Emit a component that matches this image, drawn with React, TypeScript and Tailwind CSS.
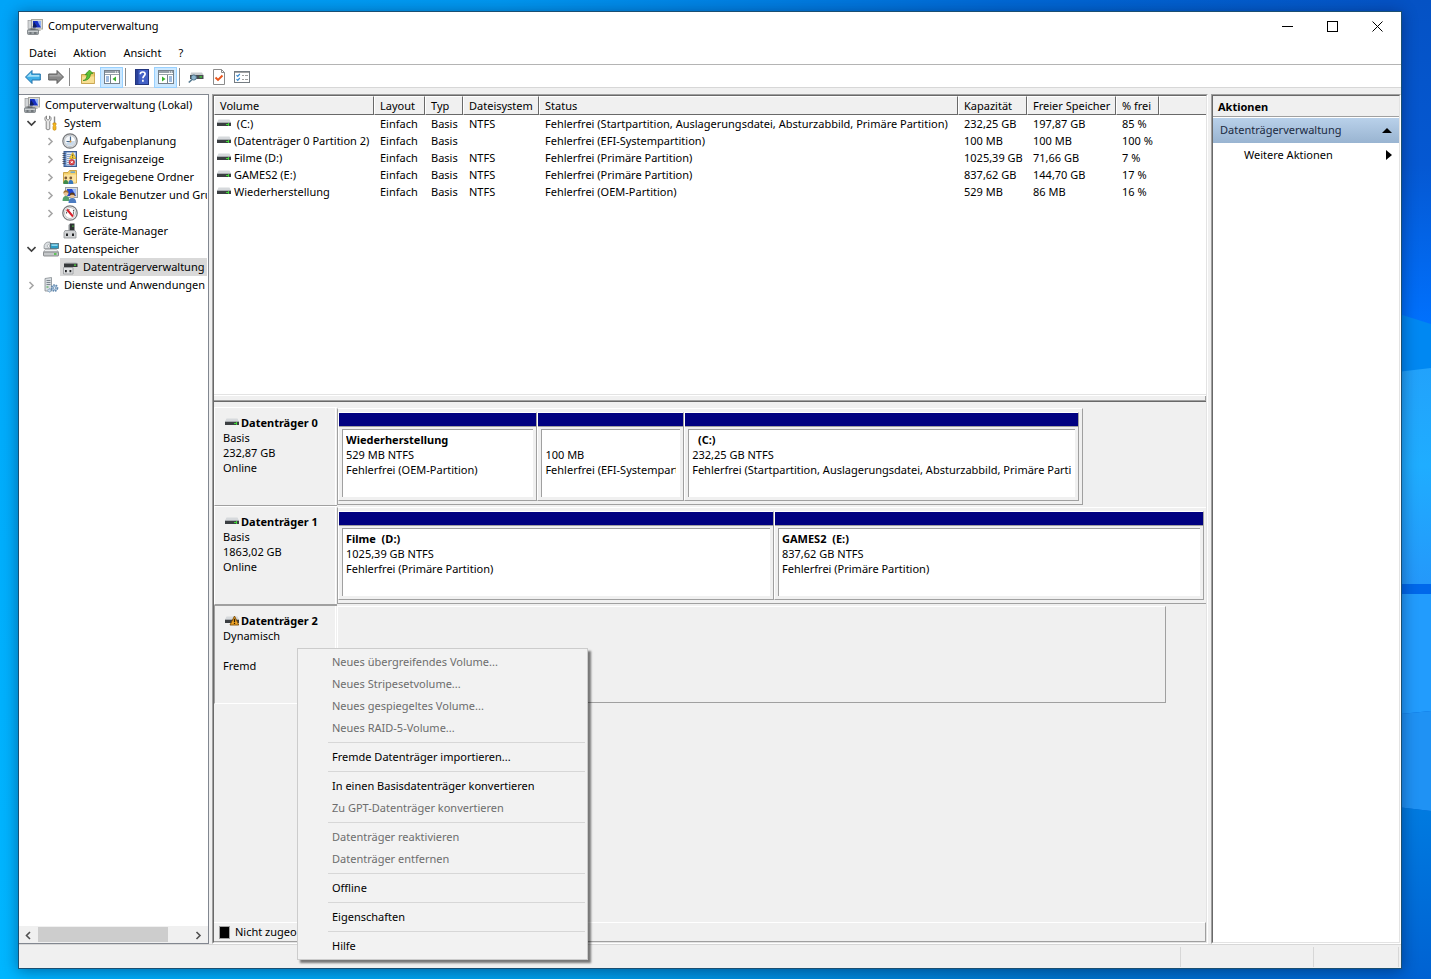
import React from 'react';

type IconProps = { className?: string };
type IconType = React.FC<IconProps>;

/* ---------- Icons ---------- */

const ComputerIcon: IconType = () => (
  <svg width="16" height="16" viewBox="0 0 16 16" className="shrink-0">
    <rect x="4.5" y="0.5" width="11" height="9.5" fill="#dcdcd6" stroke="#a9a9a1" />
    <rect x="6" y="2" width="8" height="6.5" fill="#1730c4" />
    <path d="M10.5 2H14v6.500q-2-3-3.500-6.500z" fill="#8fb0f5" />
    <path d="M8 10.500h5l1 1.500H7z" fill="#b9b9b2" />
    <rect x="1" y="1.500" width="3.500" height="8" fill="#d3d6d8" stroke="#8a8d90" strokeWidth="0.600" />
    <path d="M7 3l3 4.500-1.500 1H5.500z" fill="#10205c" />
    <rect x="0.500" y="10.500" width="11" height="5" rx="1" fill="#9aa0a4" stroke="#6b7176" strokeWidth="0.700" />
    <path d="M1 12.500h10" stroke="#c9cdcf" />
    <path d="M2.500 14h2M7 14h2.500" stroke="#474c50" />
    <path d="M3.500 10h5" stroke="#4e5357" />
  </svg>
);

const ToolsIcon: IconType = () => (
  <svg width="16" height="16" viewBox="0 0 16 16" className="shrink-0">
    <path d="M3.500 1v3L5 5.200 6.500 4V1C8.700 2.200 8.500 5 6.800 6.500V14q-1.800 1.800-3.600 0V6.500C1.500 5 1.300 2.200 3.500 1z" fill="#e6e6e6" stroke="#7c7c7c" strokeWidth="0.900" />
    <path d="M11.500 1.500v7" stroke="#8a8a8a" strokeWidth="1.400" />
    <path d="M10 8h3v2l-.6.700.6 1V14.500q-1.500 1.500-3 0v-2.800l.600-1-.600-.700z" fill="#f5b921" stroke="#c98a10" strokeWidth="0.700" />
  </svg>
);

const ClockIcon: IconType = () => (
  <svg width="16" height="16" viewBox="0 0 16 16" className="shrink-0">
    <circle cx="8" cy="8" r="7.200" fill="#dfe2e4" stroke="#77797c" strokeWidth="1.200" />
    <circle cx="8" cy="8" r="5.500" fill="#f4f7fa" stroke="#b4b8bc" strokeWidth="0.800" />
    <path d="M8 8V3.500h1.500A4.500 4.500 0 0 1 12.500 8z" fill="#fff" />
    <path d="M8 8h4.800A4.800 4.800 0 0 1 4 10.500z" fill="#c8d9ea" />
    <path d="M8.500 3.500V8.500H4.500" fill="none" stroke="#44688f" strokeWidth="1.200" />
    <circle cx="8.500" cy="8.500" r="0.900" fill="#e0952c" />
  </svg>
);

const EventIcon: IconType = () => (
  <svg width="16" height="16" viewBox="0 0 16 16" className="shrink-0">
    <rect x="2" y="0.500" width="12.500" height="15" fill="#5f88c4" stroke="#3c5c93" />
    <rect x="4.500" y="1.500" width="9" height="13" fill="#e4ebf5" />
    <path d="M5 3.500h4M5 5.500h3M5 7.500h2.500M5 9.500h2.500M5 11.500h2.500M5 13.500h8" stroke="#8ba3c9" />
    <path d="M0.500 2.500h3M0.500 4.500h3M0.500 6.500h3M0.500 8.500h3M0.500 10.500h3M0.500 12.500h3" stroke="#3a4257" strokeWidth="0.800" />
    <path d="M10.700 1.500l3.300 6H7.500z" fill="#ffd83a" stroke="#c49a12" strokeWidth="0.700" />
    <path d="M10.700 3.500v2M10.700 6v.8" stroke="#333" strokeWidth="0.900" />
    <circle cx="9.800" cy="11.200" r="2.800" fill="#dc4a50" stroke="#a52228" strokeWidth="0.600" />
    <path d="M8.800 10.200l2 2M10.800 10.200l-2 2" stroke="#fff" />
  </svg>
);

const SharedFolderIcon: IconType = () => (
  <svg width="16" height="16" viewBox="0 0 16 16" className="shrink-0">
    <path d="M1.500 3.500h4.500l1.500-2H14.500V14H1.500z" fill="#f3cf67" stroke="#c2962e" strokeWidth="0.800" />
    <path d="M8.500 2.500h4.500v1.300H8.500z" fill="#4f9fe0" />
    <path d="M2 5.500h12.200v8.200H2z" fill="#fbe3a0" />
    <circle cx="3.800" cy="9" r="1.400" fill="#7c5a35" />
    <circle cx="8.800" cy="9" r="1.400" fill="#7c5a35" />
    <path d="M1.300 15q0-4 2.500-4t2.500 4z" fill="#3f8b4c" />
    <path d="M6.300 15q0-4 2.500-4t2.500 4z" fill="#3776bd" />
  </svg>
);

const UsersIcon: IconType = () => (
  <svg width="16" height="16" viewBox="0 0 16 16" className="shrink-0">
    <rect x="3.500" y="0.500" width="12" height="10" fill="#d9dcde" stroke="#9a9ea2" />
    <rect x="5" y="2" width="9" height="7" fill="#2447cf" />
    <path d="M10 2h4v7z" fill="#9bbaf6" />
    <circle cx="4" cy="6.500" r="2.400" fill="#e9c397" />
    <path d="M1.400 6.500q0-3.300 2.600-3.300t2.600 3.300L5 5.300H3z" fill="#a4702d" />
    <path d="M0.500 14q0-5 3.500-5t3.500 5z" fill="#54a06c" />
    <circle cx="10.300" cy="8.800" r="2.400" fill="#e9c397" />
    <path d="M7.700 8.800q0-3.200 2.600-3.200t2.600 3.200l-1.600-1h-2z" fill="#5d3b1b" />
    <path d="M6.500 16q0-5 3.800-5t4 5z" fill="#4d7cc0" />
  </svg>
);

const GaugeIcon: IconType = () => (
  <svg width="16" height="16" viewBox="0 0 16 16" className="shrink-0">
    <circle cx="8" cy="8" r="7.200" fill="#fff" stroke="#77797c" strokeWidth="1.300" />
    <circle cx="8" cy="8" r="5.500" fill="none" stroke="#b5b5b5" strokeWidth="0.900" />
    <path d="M4.500 8.500q0-3.500 3-4M11.500 5v5" fill="none" stroke="#555" strokeWidth="1.100" strokeDasharray="1.500 0.700" />
    <path d="M5 4.500l6 7" stroke="#d8202a" strokeWidth="2" />
  </svg>
);

const DeviceIcon: IconType = () => (
  <svg width="16" height="16" viewBox="0 0 16 16" className="shrink-0">
    <path d="M8 .5h4.500V8H8z" fill="#2e3234" />
    <path d="M10.300 2.500h1.200v1.300h-1.200z" fill="#55e04a" />
    <path d="M8 .500L6.500 2v6H8z" fill="#8d9194" />
    <path d="M2 9.500l1-2h10l1 2V15H2z" fill="#d0d2d4" stroke="#8f9295" strokeWidth="0.800" />
    <path d="M4 10.500h2V13H4zM10 10.500h2V13h-2z" fill="#202224" />
  </svg>
);

const StorageIcon: IconType = () => (
  <svg width="16" height="16" viewBox="0 0 16 16" className="shrink-0">
    <path d="M1 7.500q-.5-7 6-6.500l1 6.500z" fill="#dde1e4" stroke="#8d9296" strokeWidth="0.800" />
    <circle cx="5.500" cy="5" r="1.300" fill="#fff" stroke="#8d9296" strokeWidth="0.600" />
    <rect x="7.500" y="2.500" width="8" height="5" fill="#2d9cc4" stroke="#4e6b78" strokeWidth="0.800" />
    <path d="M8.500 3.500h6v1.300h-6z" fill="#a8e3f5" />
    <path d="M2 8.500h11.500l2 2.500H.5z" fill="#eceeef" stroke="#989c9f" strokeWidth="0.600" />
    <rect x="0.500" y="11" width="15" height="4" rx="0.500" fill="#c4c7c9" stroke="#73777a" strokeWidth="0.800" />
    <path d="M11 13h2.500" stroke="#35c22a" strokeWidth="1.400" />
  </svg>
);

const DiskMgmtIcon: IconType = () => (
  <svg width="16" height="16" viewBox="0 0 16 16" className="shrink-0">
    <path d="M4 3h10l1.500 1.500H2z" fill="#c5c8ca" />
    <path d="M2 4.500h13.500V8H2z" fill="#36393b" />
    <path d="M12 5.500h2v1.200h-2z" fill="#4ee03f" />
    <path d="M1.500 8.500h9.500V15H1.500z" fill="#e0e2e3" stroke="#94979a" strokeWidth="0.800" />
    <path d="M3 11h1.800v2.300H3zM7.500 11h1.800v2.300H7.500z" fill="#202224" />
  </svg>
);

const ServicesIcon: IconType = () => (
  <svg width="16" height="16" viewBox="0 0 16 16" className="shrink-0">
    <path d="M2 1.500L8.500.500V14H2z" fill="#d9dee2" stroke="#858b90" strokeWidth="0.800" />
    <path d="M3.500 3.500h4M3.500 5.500h4M3.500 7.500h4" stroke="#7d868e" />
    <path d="M3.500 10h2" stroke="#3aa63a" />
    <circle cx="11.500" cy="11" r="3" fill="#b3cbe2" stroke="#6288ad" strokeWidth="1.600" strokeDasharray="1.600 0.900" />
    <circle cx="11.500" cy="11" r="1.200" fill="#fff" stroke="#6288ad" strokeWidth="0.700" />
    <circle cx="6.500" cy="13.500" r="1.600" fill="#cfe0ef" stroke="#6288ad" strokeWidth="1" strokeDasharray="1 0.600" />
  </svg>
);

const DriveIcon: React.FC<{ warn?: boolean }> = ({ warn }) => (
  <svg width="14" height="14" viewBox="0 0 14 14" className="shrink-0">
    <path d="M1.500 2.500h11L13.700 5H.3z" fill="#d6d9dc" />
    <path d="M0 5h14v1H0z" fill="#a9adb1" />
    <path d="M0 6h14v3H0z" fill="#3b3f42" />
    {warn ? (
      <>
        <path d="M9.500 2l4.300 9H5z" fill="#f0a526" stroke="#7c4c06" strokeWidth="0.900" />
        <path d="M9.500 4.800v3.200M9.500 8.800v1.200" stroke="#2a1a02" strokeWidth="1.300" />
      </>
    ) : (
      <path d="M9 7h1v1H9zM10 7h2v1h-2zM11 6h1v3h-1z" fill="#3fd636" />
    )}
  </svg>
);

const ArrowIcon: React.FC<{ forward?: boolean }> = ({ forward }) => (
  <svg width="16" height="16" viewBox="0 0 16 16">
    {forward ? (
      <>
        <path d="M15.500 8L9 1.500V5H.700v6H9v3.500z" fill="#8a8a8a" stroke="#5d5d5d" strokeLinejoin="round" />
        <path d="M1.500 6h8.300V3.500L14 7.500H1.500z" fill="#a8a8a8" />
      </>
    ) : (
      <>
        <path d="M.500 8L7 1.500V5h8.300v6H7v3.500z" fill="#3fb0e8" stroke="#2272ab" strokeLinejoin="round" />
        <path d="M2 7.700L6 3.700V6h8.300v1.700z" fill="#a5e0f8" />
      </>
    )}
  </svg>
);

const FolderUpIcon: IconType = () => (
  <svg width="16" height="16" viewBox="0 0 16 16">
    <path d="M1.500 5.500H6l1-2h7.500v11h-13z" fill="#edcb69" stroke="#b98f33" strokeWidth="0.800" />
    <path d="M2 7.500h12.200v6.600H2z" fill="#f8df93" />
    <path d="M3 11.500q4-.5 4-6L5 5.800 9.500 1 13 4.500l-2.500.3q-.5 7-7.500 6.700z" fill="#5bc236" stroke="#2f8a1c" strokeWidth="0.700" />
  </svg>
);

const PaneIcon: React.FC<{ right?: boolean }> = ({ right }) => (
  <svg width="16" height="14" viewBox="0 0 16 14">
    <rect x="0.500" y="0.500" width="15" height="13" fill="#fff" stroke="#75808a" />
    <path d="M1 1h14v2H1z" fill="#98a2ab" />
    <path d="M11 2h1M13 2h1" stroke="#fff" />
    <path d="M1 4.500h14" stroke="#98a2ab" />
    {right ? (
      <>
        <path d="M9.500 5v9" stroke="#75808a" />
        <path d="M11 7h3M11 9h3M11 11h3" stroke="#3f78c0" />
        <path d="M4 6.500v5L7.500 9z" fill="#38b02c" />
      </>
    ) : (
      <>
        <path d="M6.500 5v9" stroke="#75808a" />
        <path d="M2 7h3M2 9h3M2 11h3" stroke="#3f78c0" />
        <path d="M12 6.500v5L8.500 9z" fill="#38b02c" />
      </>
    )}
  </svg>
);

const HelpIcon: IconType = () => (
  <svg width="14" height="16" viewBox="0 0 14 16">
    <rect x="0.500" y="0.500" width="13" height="15" fill="#4361c6" stroke="#22357e" />
    <path d="M1 1h2.500v14H1z" fill="#2b429b" />
    <path d="M5.300 5.300q0-2.300 2.400-2.300t2.400 2.100c0 1.700-2.200 1.900-2.200 4.100M7.900 10.800v1.900" fill="none" stroke="#fff" strokeWidth="1.700" />
  </svg>
);

const DiskSearchIcon: IconType = () => (
  <svg width="16" height="16" viewBox="0 0 16 16">
    <path d="M3 3.500h11L15.500 6h-13z" fill="#c9cccf" />
    <path d="M2 6h13.500v4H2z" fill="#4a4e52" />
    <path d="M11.500 7.300h2.500v1.300h-2.500z" fill="#3fe035" />
    <circle cx="5.800" cy="8.500" r="2.600" fill="#8fb6cf" stroke="#54788f" />
    <path d="M4 10.500L.8 13.500" stroke="#54788f" strokeWidth="1.700" />
  </svg>
);

const DocCheckIcon: IconType = () => (
  <svg width="12" height="16" viewBox="0 0 12 16">
    <path d="M.500.500h8l3 3v12H.500z" fill="#fff" stroke="#8b8b8b" />
    <path d="M8.500.500v3h3" fill="none" stroke="#8b8b8b" />
    <path d="M2.500 8.500L5 11l4.500-4.500" fill="none" stroke="#e8551c" strokeWidth="1.900" />
  </svg>
);

const ChecklistIcon: IconType = () => (
  <svg width="16" height="12" viewBox="0 0 16 12">
    <rect x="0.500" y="0.500" width="15" height="11" fill="#fff" stroke="#757c82" />
    <path d="M1 1.500h14" stroke="#a4a4a4" />
    <path d="M2.500 4.200l1.200 1.200L5.800 3M2.500 8.200l1.200 1.200L5.800 7" fill="none" stroke="#3b8bd0" strokeWidth="1.200" />
    <path d="M8 4.500h2M11 4.500h3M8 8.500h2M11 8.500h3" stroke="#a0a0a0" />
  </svg>
);

const Chevron: React.FC<{ dir: 'down' | 'left' | 'right' }> = ({ dir }) => (
  <svg width="9" height="10" viewBox="0 0 9 10" fill="none" strokeWidth="1.600" className="shrink-0">
    {dir === 'down' && <path d="M.500 3l4 4 4-4" stroke="#404040" />}
    {dir === 'right' && <path d="M2.500 2L6 5.500 2.500 9" stroke="currentColor" />}
    {dir === 'left' && <path d="M6 2L2.500 5.500 6 9" stroke="currentColor" />}
  </svg>
);

/* ---------- Data ---------- */

type TreeNode = { label: string; icon: IconType; level: number; open?: boolean; leaf?: boolean; selected?: boolean };

const TREE: TreeNode[] = [
  { label: 'System', icon: ToolsIcon, level: 1, open: true },
  { label: 'Aufgabenplanung', icon: ClockIcon, level: 2 },
  { label: 'Ereignisanzeige', icon: EventIcon, level: 2 },
  { label: 'Freigegebene Ordner', icon: SharedFolderIcon, level: 2 },
  { label: 'Lokale Benutzer und Gruppen', icon: UsersIcon, level: 2 },
  { label: 'Leistung', icon: GaugeIcon, level: 2 },
  { label: 'Geräte-Manager', icon: DeviceIcon, level: 2, leaf: true },
  { label: 'Datenspeicher', icon: StorageIcon, level: 1, open: true },
  { label: 'Datenträgerverwaltung', icon: DiskMgmtIcon, level: 2, leaf: true, selected: true },
  { label: 'Dienste und Anwendungen', icon: ServicesIcon, level: 1 },
];

const COLUMNS = [
  { title: 'Volume', width: 'w-[160px]' },
  { title: 'Layout', width: 'w-[51px]' },
  { title: 'Typ', width: 'w-[38px]' },
  { title: 'Dateisystem', width: 'w-[76px]' },
  { title: 'Status', width: 'w-[419px]' },
  { title: 'Kapazität', width: 'w-[69px]' },
  { title: 'Freier Speicher', width: 'w-[89px]' },
  { title: '% frei', width: 'w-[43px]' },
];

const VOLUMES = [
  ['\u00a0(C:)', 'Einfach', 'Basis', 'NTFS', 'Fehlerfrei (Startpartition, Auslagerungsdatei, Absturzabbild, Primäre Partition)', '232,25 GB', '197,87 GB', '85 %'],
  ['(Datenträger 0 Partition 2)', 'Einfach', 'Basis', '', 'Fehlerfrei (EFI-Systempartition)', '100 MB', '100 MB', '100 %'],
  ['Filme (D:)', 'Einfach', 'Basis', 'NTFS', 'Fehlerfrei (Primäre Partition)', '1025,39 GB', '71,66 GB', '7 %'],
  ['GAMES2 (E:)', 'Einfach', 'Basis', 'NTFS', 'Fehlerfrei (Primäre Partition)', '837,62 GB', '144,70 GB', '17 %'],
  ['Wiederherstellung', 'Einfach', 'Basis', 'NTFS', 'Fehlerfrei (OEM-Partition)', '529 MB', '86 MB', '16 %'],
];

type Partition = { name: string; size: string; status: string; share: number };
type Disk = { name: string; type: string; size: string; state: string; width: number; foreign?: boolean; partitions: Partition[] };

const DISKS: Disk[] = [
  {
    name: 'Datenträger 0', type: 'Basis', size: '232,87 GB', state: 'Online', width: 746,
    partitions: [
      { name: 'Wiederherstellung', size: '529 MB NTFS', status: 'Fehlerfrei (OEM-Partition)', share: 199 },
      { name: '\u00a0', size: '100 MB', status: 'Fehlerfrei (EFI-Systempartition)', share: 146 },
      { name: '\u00a0\u00a0(C:)', size: '232,25 GB NTFS', status: 'Fehlerfrei (Startpartition, Auslagerungsdatei, Absturzabbild, Primäre Partition)', share: 396 },
    ],
  },
  {
    name: 'Datenträger 1', type: 'Basis', size: '1863,02 GB', state: 'Online', width: 871,
    partitions: [
      { name: 'Filme\u00a0\u00a0(D:)', size: '1025,39 GB NTFS', status: 'Fehlerfrei (Primäre Partition)', share: 436 },
      { name: 'GAMES2\u00a0\u00a0(E:)', size: '837,62 GB NTFS', status: 'Fehlerfrei (Primäre Partition)', share: 430 },
    ],
  },
  { name: 'Datenträger 2', type: 'Dynamisch', size: '\u00a0', state: 'Fremd', width: 829, foreign: true, partitions: [] },
];

const MAP_WIDTH = 869;

const MENU_GROUPS = [
  [
    { label: 'Neues übergreifendes Volume...', disabled: true },
    { label: 'Neues Stripesetvolume...', disabled: true },
    { label: 'Neues gespiegeltes Volume...', disabled: true },
    { label: 'Neues RAID-5-Volume...', disabled: true },
  ],
  [{ label: 'Fremde Datenträger importieren...', disabled: false }],
  [
    { label: 'In einen Basisdatenträger konvertieren', disabled: false },
    { label: 'Zu GPT-Datenträger konvertieren', disabled: true },
  ],
  [
    { label: 'Datenträger reaktivieren', disabled: true },
    { label: 'Datenträger entfernen', disabled: true },
  ],
  [{ label: 'Offline', disabled: false }],
  [{ label: 'Eigenschaften', disabled: false }],
  [{ label: 'Hilfe', disabled: false }],
];

/* ---------- Parts ---------- */

const Wallpaper: React.FC = () => (
  <svg className="absolute inset-0 w-full h-full" viewBox="0 0 1431 979" preserveAspectRatio="none" aria-hidden="true">
    <defs>
      <linearGradient id="sky" x1="0" x2="1" y1="0" y2="0">
        <stop offset="0" stopColor="#00a4f8" />
        <stop offset="0.350" stopColor="#0096ee" />
        <stop offset="0.700" stopColor="#0068d4" />
        <stop offset="1" stopColor="#0552c4" />
      </linearGradient>
      <linearGradient id="floor" x1="0" x2="1" y1="0" y2="0">
        <stop offset="0" stopColor="#00b2ff" />
        <stop offset="0.400" stopColor="#009ee8" />
        <stop offset="0.750" stopColor="#0074cc" />
        <stop offset="1" stopColor="#0062d2" />
      </linearGradient>
      <linearGradient id="left" x1="0" x2="0" y1="0" y2="1">
        <stop offset="0" stopColor="#00a4f8" />
        <stop offset="1" stopColor="#00b6ff" />
      </linearGradient>
      <linearGradient id="edge" x1="0" x2="0" y1="0" y2="1">
        <stop offset="0" stopColor="#0552c4" />
        <stop offset="0.500" stopColor="#0558d2" />
        <stop offset="1" stopColor="#0072ff" />
      </linearGradient>
      <linearGradient id="pane" x1="0" x2="0" y1="0" y2="1">
        <stop offset="0" stopColor="#22a2fb" />
        <stop offset="0.450" stopColor="#1fadff" />
        <stop offset="1" stopColor="#2498fa" />
      </linearGradient>
      <linearGradient id="low" x1="0" x2="0" y1="0" y2="1">
        <stop offset="0" stopColor="#007be0" />
        <stop offset="1" stopColor="#0062d2" />
      </linearGradient>
    </defs>
    <rect width="1431" height="490" fill="url(#sky)" />
    <rect y="490" width="1431" height="489" fill="url(#floor)" />
    <path d="M0 0h40v979H0z" fill="url(#left)" />
    <path d="M1380 0h51v330h-51z" fill="url(#edge)" />
    <path d="M1380 308l51 16v60h-51z" fill="#0088f2" />
    <path d="M1380 374l51-6v217h-51z" fill="url(#pane)" />
    <path d="M1380 584h51v10h-51z" fill="#0068ea" />
    <path d="M1380 594h51v117l-51 5z" fill="#229cfd" />
    <path d="M1380 716l51-5v100l-51-6z" fill="#1f92f4" />
    <path d="M1380 805l51 6v168h-51z" fill="url(#low)" />
  </svg>
);

const Sep: React.FC = () => <div className="w-px h-[18px] bg-[#8a8a8a]" />;

const ToolButton: React.FC<{ label: string; active?: boolean; children: React.ReactNode }> = ({ label, active, children }) => (
  <button
    type="button"
    aria-label={label}
    aria-pressed={active}
    className={`h-[21px] min-w-[23px] flex items-center justify-center border ${active ? 'bg-[#cce8ff] border-[#99d1ff]' : 'border-transparent'}`}
  >
    {children}
  </button>
);

const Toolbar: React.FC = () => (
  <div className="h-[23px] flex items-center bg-white border-b border-[#d7d7d7] pt-0.5 pl-0.5">
    <ToolButton label="Zurück"><ArrowIcon /></ToolButton>
    <ToolButton label="Vorwärts"><ArrowIcon forward /></ToolButton>
    <div className="px-0.5"><Sep /></div>
    <div className="pl-1"><ToolButton label="Übergeordnete Ebene"><FolderUpIcon /></ToolButton></div>
    <div className="pl-px pr-0.5"><ToolButton label="Konsolenstruktur" active><PaneIcon /></ToolButton></div>
    <Sep />
    <div className="pl-1 pr-px"><ToolButton label="Hilfe"><HelpIcon /></ToolButton></div>
    <ToolButton label="Aktionsbereich" active><PaneIcon right /></ToolButton>
    <div className="pl-0.5 pr-1"><Sep /></div>
    <ToolButton label="Datenträger suchen"><DiskSearchIcon /></ToolButton>
    <ToolButton label="Überprüfen"><DocCheckIcon /></ToolButton>
    <ToolButton label="Ansicht anpassen"><ChecklistIcon /></ToolButton>
  </div>
);

const TreeRow: React.FC<{ node: TreeNode }> = ({ node }) => {
  const Icon = node.icon;
  return (
    <li className={`flex items-center h-[18px] ${node.level === 1 ? 'pl-2' : 'pl-[27px]'}`}>
      <span className="w-[14px] shrink-0 flex items-center text-[#a6a6a6]">
        {!node.leaf && <Chevron dir={node.open ? 'down' : 'right'} />}
      </span>
      <button
        type="button"
        className={`flex-1 min-w-0 h-[18px] flex items-center gap-[5px] pl-0.5 whitespace-nowrap overflow-hidden ${node.selected ? 'bg-[#d9d9d9]' : ''}`}
      >
        <Icon />
        <span>{node.label}</span>
      </button>
    </li>
  );
};

const TreePanel: React.FC = () => (
  <nav className="w-[190px] shrink-0 bg-white border border-[#828790] border-l-0 flex flex-col overflow-hidden">
    <div className="flex-1 pt-px">
      <button type="button" className="h-[18px] flex items-center gap-[5px] pl-[5px] whitespace-nowrap">
        <ComputerIcon />
        <span>Computerverwaltung (Lokal)</span>
      </button>
      <ul className="pr-px">
        {TREE.map((n) => <TreeRow key={n.label} node={n} />)}
      </ul>
    </div>
    <div className="h-[17px] bg-[#f0f0f0] flex items-center text-[#505050]">
      <button type="button" aria-label="Nach links" className="w-[19px] shrink-0 flex justify-center"><Chevron dir="left" /></button>
      <div className="flex-1 h-[15px]"><div className="w-[86%] h-full bg-[#cdcdcd]" /></div>
      <button type="button" aria-label="Nach rechts" className="w-[19px] shrink-0 flex justify-center"><Chevron dir="right" /></button>
    </div>
  </nav>
);

const VolumeTable: React.FC = () => (
  <div className="h-[298px] shrink-0 bg-white overflow-hidden">
    <table className="w-full table-fixed border-collapse text-left">
      <thead>
        <tr className="h-[19px]">
          {COLUMNS.map((c) => (
            <th key={c.title} className={`p-0 font-normal ${c.width}`}>
              <div className="h-[19px] leading-[18px] pl-[5px] bg-[#f0f0f0] border-l border-t border-l-white border-t-white border-r border-b border-r-[#696969] border-b-[#696969] whitespace-nowrap">
                {c.title}
              </div>
            </th>
          ))}
          <th className="p-0" aria-label="Leer">
            <div className="h-[19px] bg-[#f0f0f0] border-l border-t border-l-white border-t-white border-b border-b-[#696969]" />
          </th>
        </tr>
      </thead>
      <tbody>
        {VOLUMES.map((v) => (
          <tr key={v[0]} className="h-[17px] leading-[17px]">
            {v.map((cell, i) => (
              <td key={i} className="p-0 whitespace-nowrap">
                {i === 0 ? (
                  <div className="flex items-center gap-[3px] pl-[3px]"><DriveIcon />{cell}</div>
                ) : (
                  <div className="pl-1.5">{cell}</div>
                )}
              </td>
            ))}
            <td />
          </tr>
        ))}
      </tbody>
    </table>
  </div>
);

const PartitionBox: React.FC<{ p: Partition }> = ({ p }) => (
  <div
    className="min-w-0 flex flex-col border-l border-t border-white border-r border-b border-r-[#a0a0a0] border-b-[#a0a0a0]"
    style={{ flex: `${p.share} 1 0` }}
  >
    <div className="h-[14px] shrink-0 bg-[#000080] border-b border-[#a0a0a0]" />
    <div className="flex-1 mt-0.5 mx-[3px] mb-[3px] bg-white border-l border-t border-[#a0a0a0] pl-[3px] pt-0.5 pr-1 leading-[15px] whitespace-nowrap">
      <div className="overflow-hidden">
        <div className="font-bold">{p.name}</div>
        <div>{p.size}</div>
        <div>{p.status}</div>
      </div>
    </div>
  </div>
);

const DiskRow: React.FC<{ disk: Disk }> = ({ disk }) => (
  <div className="h-[99px] shrink-0 flex">
    <div
      className={`w-[123px] shrink-0 border-t border-l border-b ${disk.foreign ? 'border-[#a0a0a0] border-b-white' : 'border-white border-b-[#a0a0a0]'}`}
    >
      <div className="w-[121px] h-full border-r border-white pl-2 pt-[7px] leading-[15px]">
        <div className="flex items-center gap-0.5 pl-0.5 font-bold whitespace-nowrap">
          <DriveIcon warn={disk.foreign} />
          {disk.name}
        </div>
        <div>{disk.type}</div>
        <div>{disk.size}</div>
        <div>{disk.state}</div>
      </div>
    </div>
    <div className="flex-1 min-w-0 pt-px pb-px overflow-hidden">
      <div
        className={`h-full flex border-t border-t-white border-l border-r border-b border-r-[#a0a0a0] border-b-[#a0a0a0] pt-[3px] pb-[3px] pr-[3px] ${disk.foreign ? 'border-l-white' : 'border-l-[#a0a0a0]'}`}
        style={{ width: `${(disk.width / MAP_WIDTH) * 100}%` }}
      >
        {disk.partitions.map((p) => <PartitionBox key={p.size} p={p} />)}
      </div>
    </div>
  </div>
);

const ContentPanel: React.FC = () => (
  <main className="ml-[3px] flex-1 min-w-0 border border-[#a0a0a0] border-r-white border-b-white flex">
    <div className="flex-1 min-w-0 border border-[#696969] border-r-[#e3e3e3] border-b-[#e3e3e3] flex flex-col">
      <VolumeTable />
      <div className="h-2 shrink-0 border-t border-b border-t-[#e3e3e3] border-b-[#696969] flex flex-col">
        <div className="h-px bg-white" />
        <div className="flex-1 border-b border-r border-[#a0a0a0]" />
      </div>
      <section className="flex-1 flex flex-col pt-[5px] overflow-hidden">
        {DISKS.map((d) => <DiskRow key={d.name} disk={d} />)}
      </section>
      <div className="h-5 shrink-0 border-t border-t-white border-r border-b border-r-[#a0a0a0] border-b-[#a0a0a0] flex items-center pl-[5px] gap-[5px]">
        <span className="w-[11px] h-[13px] bg-black border border-[#a0a0a0]" />
        <span>Nicht zugeordnet</span>
      </div>
    </div>
  </main>
);

const ActionsPanel: React.FC = () => (
  <aside className="ml-[3px] w-[190px] shrink-0 border border-[#a0a0a0] border-r-white border-b-white flex">
    <div className="flex-1 bg-white border border-[#696969] border-r-[#e3e3e3] border-b-[#e3e3e3]">
      <h2 className="h-[21px] leading-[21px] pl-[5px] bg-[#f0f0f0] border-b border-[#a0a0a0] font-bold">Aktionen</h2>
      <button type="button" className="mt-px w-full h-[25px] flex items-center justify-between pl-[7px] pr-[7px] bg-linear-to-b from-[#b9d1ea] to-[#99b4d1] text-[#1b2a3f]">
        Datenträgerverwaltung
        <svg width="10" height="5" viewBox="0 0 10 5"><path d="M0 5l5-5 5 5z" fill="#000" /></svg>
      </button>
      <button type="button" className="w-full h-6 flex items-center justify-between pl-[31px] pr-[7px]">
        Weitere Aktionen
        <svg width="6" height="10" viewBox="0 0 6 10"><path d="M0 0l6 5-6 5z" fill="#000" /></svg>
      </button>
    </div>
  </aside>
);

const ContextMenu: React.FC = () => (
  <div role="menu" className="absolute left-[297px] top-[648px] w-[291px] bg-[#f2f2f2] border border-[#ccc] p-0.5 shadow-[3px_3px_2px_rgba(0,0,0,0.5)]">
    {MENU_GROUPS.map((group, i) => (
      <div key={i} role="group" className={i > 0 ? 'pt-[7px]' : ''}>
        {i > 0 && <div className="-mt-1 mb-[3px] ml-7 h-px bg-[#d7d7d7]" />}
        {group.map((item) => (
          <button
            key={item.label}
            type="button"
            role="menuitem"
            disabled={item.disabled}
            className="block w-full h-[22px] pl-8 text-left text-black disabled:text-[#6d6d6d]"
          >
            {item.label}
          </button>
        ))}
      </div>
    ))}
  </div>
);

const TitleBar: React.FC = () => (
  <header className="h-[30px] flex items-center pl-2 pr-px pb-px bg-white">
    <ComputerIcon />
    <h1 className="flex-1 pl-[5px]">Computerverwaltung</h1>
    <button type="button" aria-label="Minimieren" className="w-[45px] flex justify-center">
      <svg width="11" height="11" viewBox="0 0 11 11"><path d="M0 5.500h11" stroke="#000" /></svg>
    </button>
    <button type="button" aria-label="Maximieren" className="w-[45px] flex justify-center">
      <svg width="11" height="11" viewBox="0 0 11 11"><rect x="0.500" y="0.500" width="10" height="10" fill="none" stroke="#000" /></svg>
    </button>
    <button type="button" aria-label="Schließen" className="w-[45px] flex justify-center">
      <svg width="11" height="11" viewBox="0 0 11 11"><path d="M.500.500l10 10M10.500.500l-10 10" stroke="#000" /></svg>
    </button>
  </header>
);

const App: React.FC = () => (
  <div className="relative h-screen overflow-hidden bg-[#0090ee] font-['Noto_Sans',sans-serif] text-[11px] text-black">
    <Wallpaper />
    <div className="relative h-full pt-[11px] pl-[18px] pr-[29px] pb-[10px]">
      <div className="h-full flex flex-col bg-[#f0f0f0] border border-[#1b4f72] shadow-[0_2px_14px_rgba(0,20,60,0.45)]">
        <TitleBar />
        <div className="h-[23px] flex items-center gap-[17px] pl-2.5 bg-white border-b border-[#b4b4b4]">
          <button type="button">Datei</button>
          <button type="button">Aktion</button>
          <button type="button">Ansicht</button>
          <button type="button">?</button>
        </div>
        <Toolbar />
        <div className="flex-1 min-h-0 pt-1.5 flex">
          <TreePanel />
          <ContentPanel />
          <ActionsPanel />
        </div>
        <footer className="h-6 shrink-0 border-t border-[#d7d7d7] flex justify-end pt-0.5 pb-px pr-0.5">
          <div className="w-[133px] border-l border-[#d7d7d7]" />
          <div className="w-[86px] border-l border-r border-[#d7d7d7]" />
        </footer>
      </div>
    </div>
    <ContextMenu />
  </div>
);

export default App;
